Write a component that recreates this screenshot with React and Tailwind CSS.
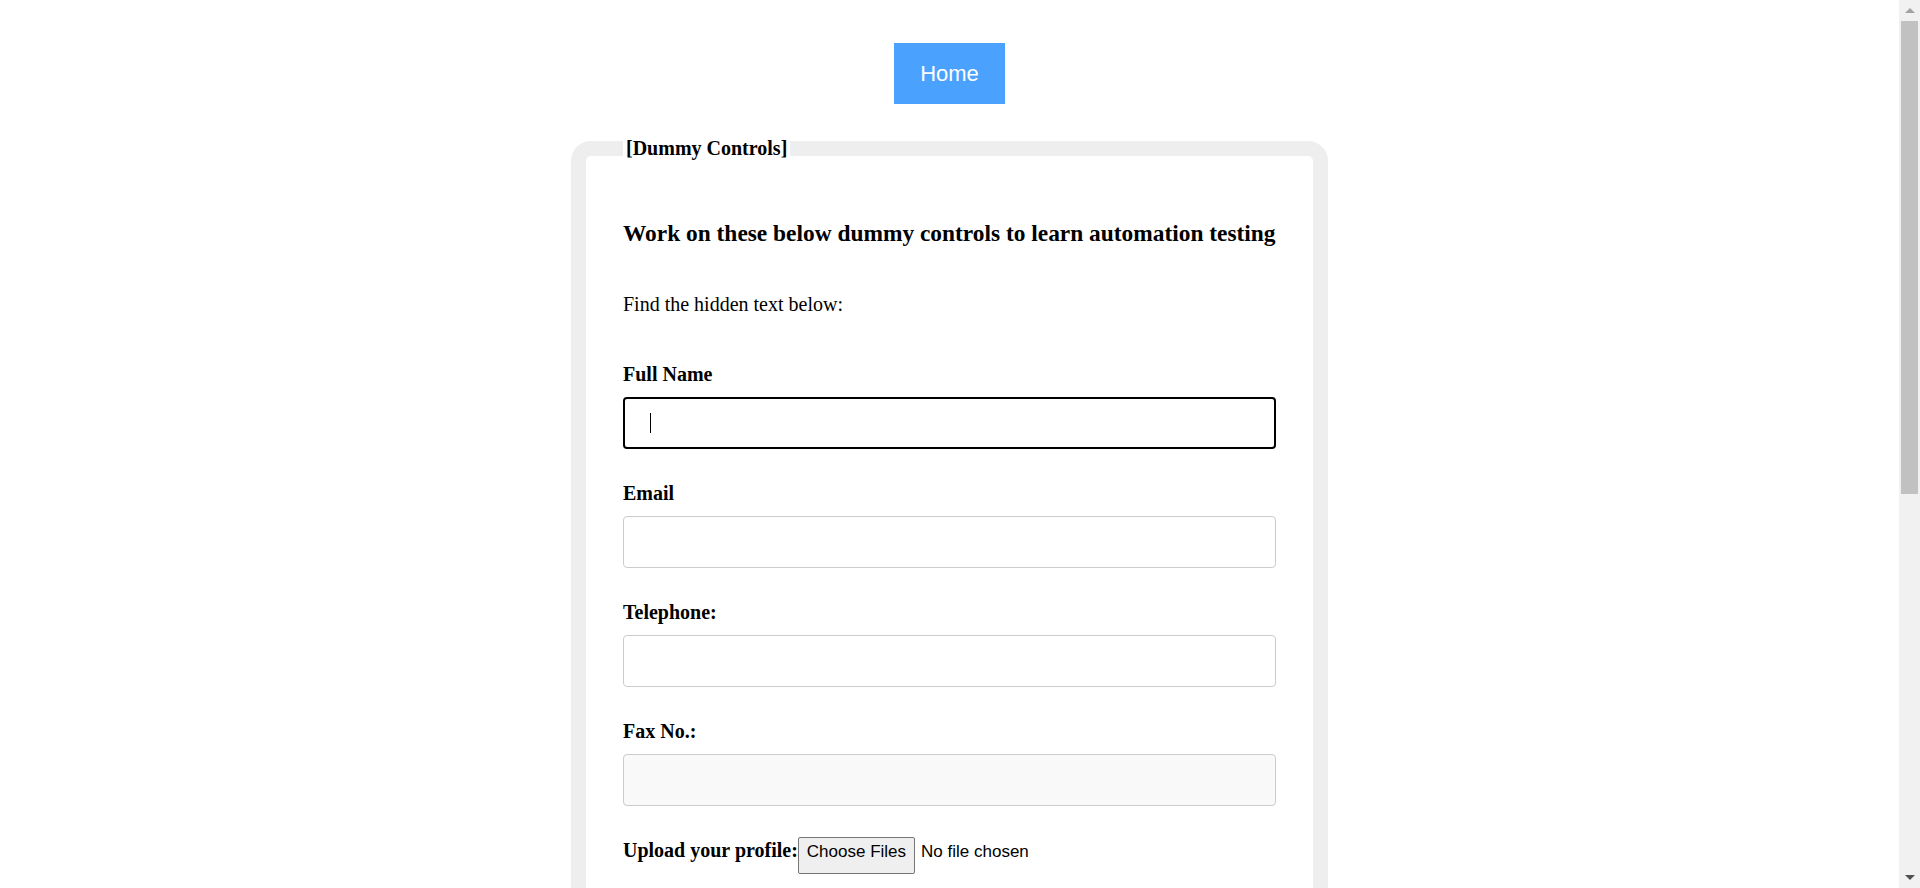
import React from 'react';

const serif = "font-['Liberation_Serif','Times_New_Roman',serif]";
const sans = "font-['Liberation_Sans',Arial,sans-serif]";

function Field({ label, children }) {
  return (
    <div className="mb-[33px]">
      <label className="block text-[20px] leading-[23px] font-bold text-black">{label}</label>
      <div className="mt-[11px]">{children}</div>
    </div>
  );
}

function Scrollbar() {
  // drawn window scrollbar, as seen in the screenshot
  return (
    <div className="fixed top-0 right-0 flex h-screen w-[21px] flex-col items-center bg-[#f1f1f1]">
      <div className="flex h-[21px] w-full items-center justify-center">
        <span className="h-0 w-0 border-x-[5px] border-b-[5px] border-x-transparent border-b-[#a3a3a3]" />
      </div>
      <div className="h-[473px] w-[17px] bg-[#c1c1c1]" />
      <div className="flex-1" />
      <div className="flex h-[21px] w-full items-center justify-center">
        <span className="h-0 w-0 border-x-[5px] border-t-[5px] border-x-transparent border-t-[#505050]" />
      </div>
    </div>
  );
}

export default function App() {
  return (
    <div className={`${serif} min-h-[2720px] bg-white text-black pr-[21px]`}>
      <div className="flex justify-center pt-[43px]">
        <a
          href="#"
          className={`${sans} flex h-[61px] w-[111px] items-center justify-center bg-[#4aa1fe] text-[22px] text-white`}
        >
          Home
        </a>
      </div>

      <fieldset className="mx-auto mt-[33px] w-[757px] rounded-[20px] border-[15px] border-[#eeeeee] px-[37px] pt-[60px] pb-[1700px]">
        <legend className="bg-white px-[3px] text-[20px] leading-[23px] font-bold">[Dummy Controls]</legend>

        <h3 className="text-[23.4px] leading-[27px] font-bold whitespace-nowrap">
          Work on these below dummy controls to learn automation testing
        </h3>

        <p className="mt-[46px] text-[20px] leading-[23px]">Find the hidden text below:</p>

        <div className="mt-[47px]">
          <Field label="Full Name">
            <div className="flex h-[52px] items-center rounded-[4px] border-2 border-black bg-white">
              <span className="ml-[25px] h-[20px] w-px bg-black" />
            </div>
          </Field>

          <Field label="Email">
            <input type="text" className="block h-[52px] w-full rounded-[4px] border border-[#cccccc] bg-white px-[25px] outline-none" />
          </Field>

          <Field label="Telephone:">
            <input type="text" className="block h-[52px] w-full rounded-[4px] border border-[#cccccc] bg-white px-[25px] outline-none" />
          </Field>

          <Field label="Fax No.:">
            <input type="text" readOnly className="block h-[52px] w-full rounded-[4px] border border-[#cccccc] bg-[#f9f9f9] px-[25px] outline-none" />
          </Field>

          <div className="-mt-[2px] flex items-baseline">
            <span className="text-[20px] leading-[23px] font-bold">Upload your profile:</span>
            <span className={`${sans} flex h-[37px] items-start rounded-[2px] border border-[#767676] bg-[#efefef] px-[8px] pt-[4px] text-[17px] leading-[19px]`}>
              Choose Files
            </span>
            <span className={`${sans} ml-[6px] text-[17px] leading-[19px]`}>No file chosen</span>
          </div>
        </div>
      </fieldset>

      <Scrollbar />
    </div>
  );
}
